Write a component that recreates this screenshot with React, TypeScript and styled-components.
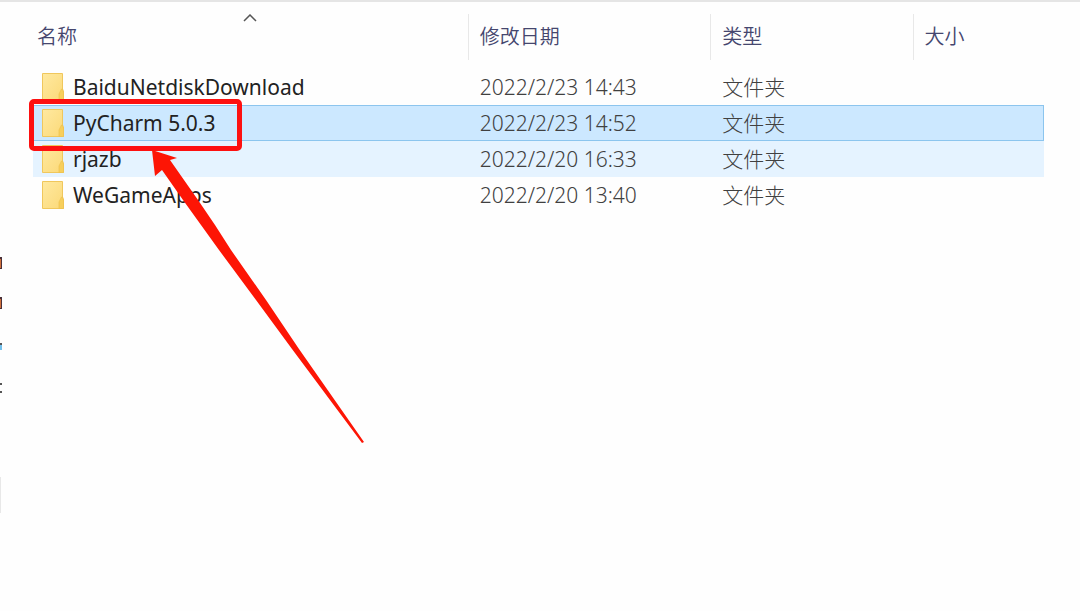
import React from "react";
import styled, { createGlobalStyle } from "styled-components";

const GlobalStyle = createGlobalStyle`
  * { box-sizing: border-box; }
  body {
    margin: 0;
    background: #fefefe;
    font-family: "Noto Sans", "Noto Sans CJK SC", sans-serif;
  }
`;

const Window = styled.main`
  display: flex;
  align-items: flex-start;
  min-height: 100vh;
  border-top: 2px solid #e5e5e5;
`;

const NavEdge = styled.aside`
  flex: none;
  width: 33px;
  padding-top: 255px;
`;

const ListPane = styled.section`
  position: relative;
  flex: 1;
  min-width: 0;
  margin-right: 36px;
  padding-top: 12px;
`;

const FileTable = styled.table`
  width: 100%;
  table-layout: fixed;
  border-spacing: 0;
`;

const Column = styled.col<{ $width?: string }>`
  width: ${(p) => p.$width ?? "auto"};
`;

const HeadCell = styled.th<{ $first?: boolean }>`
  position: relative;
  height: 46px;
  padding: 0 0 2px ${(p) => (p.$first ? 4 : 11)}px;
  border-left: ${(p) => (p.$first ? 0 : 1)}px solid #e8e8e8;
  text-align: left;
`;

const SortButton = styled.button`
  padding: 0;
  border: 0;
  background: none;
  color: #45466e;
  font: 350 20px/30px "Noto Sans CJK SC", sans-serif;
`;

const SortArrow = styled.svg`
  position: absolute;
  top: 0;
  left: 50%;
  transform: translateX(-50%);
`;

const Spacer = styled.tbody`
  td { height: 9px; padding: 0; }
`;

const Row = styled.tr<{ $state?: "selected" | "hover" }>`
  background: ${(p) =>
    p.$state === "selected" ? "#cce8ff" : p.$state === "hover" ? "#e5f3ff" : "transparent"};
  outline: ${(p) => (p.$state === "selected" ? "1px solid #8cc5ee" : "none")};
  outline-offset: -1px;
`;

const Cell = styled.td`
  height: 36px;
  padding: 0 0 0 12px;
  color: #404040;
  font-size: 21px;
  font-weight: 300;
  line-height: 30px;
  white-space: nowrap;
`;

const TypeCell = styled(Cell)`
  padding-bottom: 2px;
  font-family: "Noto Sans CJK SC", sans-serif;
`;

const NameCell = styled(Cell)`
  padding-left: 9px;
  color: #222;
  font-weight: 400;
`;

const NameLine = styled.div`
  display: flex;
  align-items: center;
  gap: 9px;
`;

const Highlight = styled.div`
  position: absolute;
  top: 97px;
  left: -4px;
  width: 213px;
  height: 52px;
  border: 5px solid #fd1010;
  border-radius: 5px;
  pointer-events: none;
`;

const Pointer = styled.svg`
  position: absolute;
  top: 146px;
  left: 117px;
  pointer-events: none;
`;

const FolderIcon = () => (
  <svg width="22" height="28" viewBox="0 0 22 28" aria-hidden="true">
    <defs>
      <linearGradient id="folder" x1="0" y1="0" x2="1" y2="1">
        <stop offset="0" stopColor="#ffe9a0" />
        <stop offset="1" stopColor="#fbd978" />
      </linearGradient>
    </defs>
    <path d="M.5.5h20V16l1 3v8.500H.5z" fill="url(#folder)" stroke="#f0c75c" />
    <path d="M17 27.500V21l2.500-5h1l1 3v8.500z" fill="#f7cf5c" stroke="#ecc04c" strokeWidth=".6" />
  </svg>
);

const files = [
  { name: "BaiduNetdiskDownload", date: "2022/2/23 14:43" },
  { name: "PyCharm 5.0.3", date: "2022/2/23 14:52", state: "selected" as const },
  { name: "rjazb", date: "2022/2/20 16:33", state: "hover" as const },
  { name: "WeGameApps", date: "2022/2/20 13:40" },
];

export default function App() {
  return (
    <>
      <GlobalStyle />
      <Window>
        <NavEdge>
          <svg width="3" height="260" viewBox="0 0 3 260" aria-hidden="true">
            <path d="M0 0h2v12H0zM0 40h2v12H0z" fill="#4a3038" />
            <path d="M0 2h1v9H0zM0 42h1v9H0z" fill="#d0703c" />
            <path d="M0 88h2v5H0z" fill="#73c0ec" />
            <path d="M0 86h2v2H0zM0 126h2v2H0zM0 134h2v2H0z" fill="#555" />
            <path d="M0 220h1v36H0z" fill="#e8e8e8" />
          </svg>
        </NavEdge>
        <ListPane>
          <FileTable>
            <colgroup>
              <Column $width="43%" />
              <Column $width="24%" />
              <Column $width="20%" />
              <Column />
            </colgroup>
            <thead>
              <tr>
                <HeadCell $first aria-sort="ascending">
                  <SortButton>名称</SortButton>
                  <SortArrow width="14" height="8" viewBox="0 0 14 8" aria-hidden="true">
                    <path d="M1 7l6-6 6 6" fill="none" stroke="#555" strokeWidth="1.500" />
                  </SortArrow>
                </HeadCell>
                <HeadCell><SortButton>修改日期</SortButton></HeadCell>
                <HeadCell><SortButton>类型</SortButton></HeadCell>
                <HeadCell><SortButton>大小</SortButton></HeadCell>
              </tr>
            </thead>
            <Spacer><tr><td colSpan={4} /></tr></Spacer>
            <tbody>
              {files.map((f) => (
                <Row key={f.name} $state={f.state}>
                  <NameCell>
                    <NameLine><FolderIcon />{f.name}</NameLine>
                  </NameCell>
                  <Cell>{f.date}</Cell>
                  <TypeCell>文件夹</TypeCell>
                  <Cell />
                </Row>
              ))}
            </tbody>
          </FileTable>
          <Highlight />
          <Pointer width="216" height="298" viewBox="0 0 216 298" aria-hidden="true">
            <path d="M2 2L27 10 20 12 48 52 65 77 81 102 116 152 149 201 214 294 212 295 142 201 106 152 69 102 33 52 12 22 5 28z" fill="#fd1505" />
          </Pointer>
        </ListPane>
      </Window>
    </>
  );
}
